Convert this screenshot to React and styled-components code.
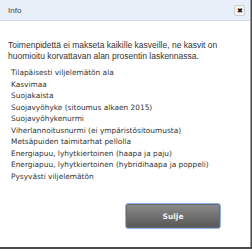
import React from "react";
import styled, { createGlobalStyle } from "styled-components";

const Global = createGlobalStyle`
  html, body { margin: 0; padding: 0; }
  body { width: 252px; height: 249px; overflow: hidden; background: #4a4a4a; }
`;

const Dialog = styled.div`
  width: 250px;
  height: 247px;
  background: #fff;
  border-right: 1px solid #9a9a9a;
  display: flex;
  flex-direction: column;
  box-sizing: content-box;
`;

const Header = styled.div`
  height: 20px;
  background: #e7eff8;
  border-bottom: 1px solid #d2dce6;
  display: flex;
  align-items: center;
  justify-content: space-between;
  padding: 0 5px 0 8px;
`;

const Title = styled.span`
  font-family: "Liberation Sans", Arial, sans-serif;
  font-size: 8px;
  color: #444;
`;

const Close = styled.button`
  width: 11px;
  height: 11px;
  padding: 0;
  border: 1px solid #cfcfcf;
  background: #f4f4f4;
  border-radius: 2px;
  display: flex;
  align-items: center;
  justify-content: center;
  font-size: 7px;
  line-height: 1;
  color: #111;
`;

const Body = styled.div`
  flex: 1;
  padding: 19px 8px 0 8px;
  display: flex;
  flex-direction: column;
`;

const Intro = styled.p`
  margin: 0;
  font-family: "Liberation Sans", Arial, sans-serif;
  font-size: 8.5px;
  line-height: 10.5px;
  color: #333;
`;

const List = styled.ul`
  list-style: none;
  margin: 6px 0 0 0;
  padding: 0 0 0 3px;
`;

const Item = styled.li`
  font-family: "DejaVu Sans", Verdana, sans-serif;
  font-size: 7.4px;
  line-height: 11.5px;
  color: #333;
`;

const Footer = styled.div`
  display: flex;
  justify-content: flex-end;
  padding: 21px 21px 0 0;
`;

const Button = styled.button`
  width: 96px;
  height: 26px;
  border: 1px solid #8fb4ea;
  border-radius: 3px;
  background: linear-gradient(#8c8c8c, #555);
  box-shadow: inset 0 0 0 1px #6a6a6a;
  color: #f2f2f2;
  font-family: "DejaVu Sans", Verdana, sans-serif;
  font-size: 7.5px;
  font-weight: bold;
`;

const items = [
  "Tilapäisesti viljelemätön ala",
  "Kasvimaa",
  "Suojakaista",
  "Suojavyöhyke (sitoumus alkaen 2015)",
  "Suojavyöhykenurmi",
  "Viherlannoitusnurmi (ei ympäristösitoumusta)",
  "Metsäpuiden taimitarhat pellolla",
  "Energiapuu, lyhytkiertoinen (haapa ja paju)",
  "Energiapuu, lyhytkiertoinen (hybridihaapa ja poppeli)",
  "Pysyvästi viljelemätön",
];

export default function App() {
  return (
    <>
      <Global />
      <Dialog>
        <Header>
          <Title>Info</Title>
          <Close>✖</Close>
        </Header>
        <Body>
          <Intro>
            Toimenpidettä ei makseta kaikille kasveille, ne kasvit on huomioitu korvattavan alan prosentin laskennassa.
          </Intro>
          <List>
            {items.map((t) => (
              <Item key={t}>{t}</Item>
            ))}
          </List>
          <Footer>
            <Button>Sulje</Button>
          </Footer>
        </Body>
      </Dialog>
    </>
  );
}
